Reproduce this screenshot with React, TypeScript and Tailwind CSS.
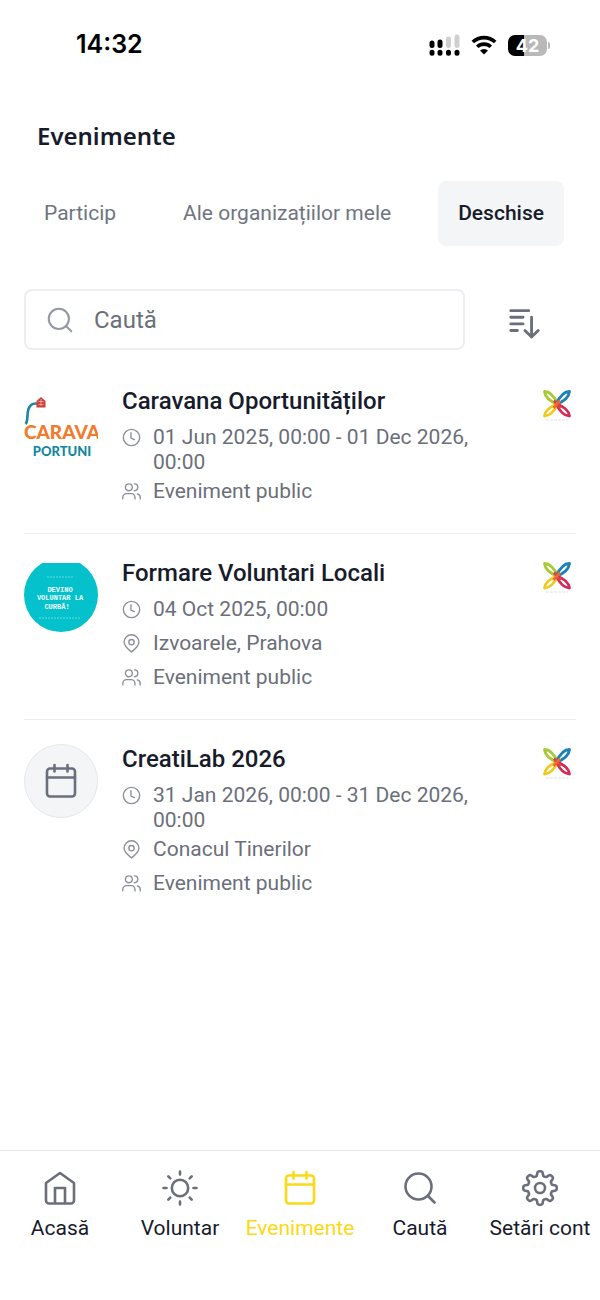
import type { ReactNode } from 'react';

type IconProps = { className?: string };

function Icon({ className, width = 2.6, children }: IconProps & { width?: number; children: ReactNode }) {
    return (
        <svg viewBox="0 0 36 36" fill="none" stroke="currentColor" strokeWidth={width} strokeLinecap="round" strokeLinejoin="round" aria-hidden="true" className={className}>
            {children}
        </svg>
    );
}

const HomeIcon = ({ className }: IconProps) => (
    <Icon className={className}>
        <path d="M4 13 18 3l14 10V30.500a3 3 0 0 1-3 3H7a3 3 0 0 1-3-3Z" />
        <path d="M13 33V18h10V33" />
    </Icon>
);

const SunIcon = ({ className }: IconProps) => (
    <Icon className={className}>
        <circle cx="18" cy="18" r="8.2" />
        <path d="M18 1.500v3M18 31.500v3M1.500 18h3M31.500 18h3M6.300 6.300l2 2M27.700 27.700l2 2M29.700 6.300l-2 2M8.300 27.700l-2 2" />
    </Icon>
);

const CalendarIcon = ({ className }: IconProps) => (
    <Icon className={className}>
        <rect x="4" y="5.500" width="28" height="28" rx="3" />
        <path d="M4 14.500h28M11.500 2v6.500M24.500 2v6.500" />
    </Icon>
);

const SearchIcon = ({ className }: IconProps) => (
    <Icon className={className}>
        <circle cx="16.500" cy="16.500" r="13" />
        <path d="m26 26 6.500 6.500" />
    </Icon>
);

// Eight soft teeth around the hub
const gearPoints = Array.from({ length: 144 }, (_, i) => {
    const a = (i / 144) * Math.PI * 2;
    const r = 14.5 + 2.3 * Math.tanh(2.2 * Math.cos(8 * a));
    return `${(18 + r * Math.cos(a)).toFixed(2)},${(18 + r * Math.sin(a)).toFixed(2)}`;
}).join(' ');

const GearIcon = ({ className }: IconProps) => (
    <Icon className={className}>
        <polygon points={gearPoints} />
        <circle cx="18" cy="18" r="5" />
    </Icon>
);

const SortIcon = ({ className }: IconProps) => (
    <Icon className={className} width={3}>
        <path d="M4 6h19M4 13h13M4 20h13M4 27h7M26 13v20M19 27l7 7 7-7" />
    </Icon>
);

const ClockIcon = ({ className }: IconProps) => (
    <Icon className={className}>
        <circle cx="18" cy="18" r="15.500" />
        <path d="M17 9v10l6.500 3" />
    </Icon>
);

const PinIcon = ({ className }: IconProps) => (
    <Icon className={className}>
        <path d="M18 34C12 29 4 23 4 15.500a14 14 0 0 1 28 0C32 23 24 29 18 34Z" />
        <circle cx="18" cy="15.500" r="5" />
    </Icon>
);

const PeopleIcon = ({ className }: IconProps) => (
    <Icon className={className}>
        <circle cx="13" cy="10" r="6.500" />
        <path d="M1.500 32v-3a7 7 0 0 1 7-7h9a7 7 0 0 1 7 7v3M23.500 3.500a6.500 6.500 0 0 1 0 13M29 22.500a7 7 0 0 1 5.500 6.500v3" />
    </Icon>
);

const OrgLogo = () => (
    <svg viewBox="0 0 30 34" fill="none" strokeWidth="2.800" strokeLinejoin="round" className="mt-[3px] mr-1 h-[34px] w-[30px] shrink-0" role="img" aria-label="Organizație">
        <path d="M2.500 2.500C8 2.500 12 6.500 16 15.500 7 12 3 8 2.500 2.500Z" stroke="#a9c936" />
        <path d="M27.500 2.500C22 2.500 18 6.500 14 15.500 23 12 27 8 27.500 2.500Z" stroke="#2080b8" />
        <path d="M2.500 27C8 27 12 23 16 14.500 7 18 3 21.500 2.500 27Z" stroke="#f0cb1f" />
        <path d="M27.500 27C22 27 18 23 14 14.500 23 18 27 21.500 27.500 27Z" stroke="#d42a55" />
        <path d="M12 11.500 18.500 19" stroke="#d9443f" />
        <path d="M18 11.500 11.500 19" stroke="#ea6a35" />
        <path d="M4 31h22" stroke="#dfe0e8" strokeWidth="1" strokeDasharray="3 1" />
    </svg>
);

const CaravanaAvatar = () => (
    <svg viewBox="0 0 74 74" className="size-[74px] shrink-0" role="img" aria-label="Caravana Oportunităților">
        <path d="M1.500 38c3-3 1-9 3-15s7-6 10-5" fill="none" stroke="#1d86a0" strokeWidth="2.600" />
        <path d="m12.500 15 4.500-4 4.500 4v6.500h-9z" fill="#cf3f3c" />
        <path d="M14.500 15.500h5M14.500 18.500h5M17 13v7" stroke="#eeb5ae" strokeWidth="0.8" />
        <text x="0" y="53" fontSize="19" fontWeight="900" fill="#f27a2c" className="font-['Lato',sans-serif]">CARAVA</text>
        <text x="38" y="70" fontSize="13" fontWeight="900" textAnchor="middle" fill="#12889f" className="font-['Lato',sans-serif]">PORTUNI</text>
    </svg>
);

const FormareAvatar = () => (
    <svg viewBox="0 0 74 74" className="size-[74px] shrink-0 rounded-full" role="img" aria-label="Devino voluntar la curbă">
        <path d="M0 5h74v69H0z" fill="#04c1cb" />
        <path d="M23 19h26M15 60h42" stroke="#5fdbe1" strokeWidth="1" strokeDasharray="2 1" />
        <g fill="#effcfc" fontSize="7" fontWeight="700" textAnchor="middle" className="font-['Liberation_Mono',monospace]">
            <text x="36" y="34">DEVINO</text>
            <text x="36" y="42">VOLUNTAR LA</text>
            <text x="33" y="51">CURBĂ!</text>
        </g>
    </svg>
);

const CalendarAvatar = () => (
    <div className="flex size-[74px] shrink-0 items-center justify-center rounded-full border border-gray-200 bg-[#f3f5f7]">
        <CalendarIcon className="size-9 text-[#6b6f7c]" />
    </div>
);

const events = [
    { title: 'Caravana Oportunităților', date: '01 Jun 2025, 00:00 - 01 Dec 2026, 00:00', place: '', avatar: <CaravanaAvatar /> },
    { title: 'Formare Voluntari Locali', date: '04 Oct 2025, 00:00', place: 'Izvoarele, Prahova', avatar: <FormareAvatar /> },
    { title: 'CreatiLab 2026', date: '31 Jan 2026, 00:00 - 31 Dec 2026, 00:00', place: 'Conacul Tinerilor', avatar: <CalendarAvatar /> },
];

const tabs = ['Particip', 'Ale organizațiilor mele', 'Deschise'];

const navItems = [
    { label: 'Acasă', icon: HomeIcon },
    { label: 'Voluntar', icon: SunIcon },
    { label: 'Evenimente', icon: CalendarIcon },
    { label: 'Caută', icon: SearchIcon },
    { label: 'Setări cont', icon: GearIcon },
];

function StatusBar() {
    return (
        <div className="flex h-[90px] items-center justify-between pr-[50px] pl-[76px] text-black">
            <span className="font-['Inter',sans-serif] text-[25px] font-semibold">14:32</span>
            <div className="flex items-center gap-[11px]">
                <svg viewBox="0 0 31 22" className="h-[22px] w-[31px]" aria-hidden="true">
                    <path d="M3 9v2.500M11 8v3.500M3 18.200v1M11 18.200v1M19.500 18.200v1M28 18.200v1" stroke="#000" strokeWidth="5" strokeLinecap="round" />
                    <path d="M19.500 5v6.500M28 3v8.500" stroke="#cfcfcf" strokeWidth="5" strokeLinecap="round" />
                </svg>
                <svg viewBox="0 0 26 20" fill="none" stroke="#000" strokeWidth="3.600" className="h-5 w-[26px]" aria-hidden="true">
                    <path d="M1.800 7a16.500 16.500 0 0 1 22.400 0M6.200 11.800a10 10 0 0 1 13.600 0" />
                    <path d="M13 19.500 9 15.600a5.800 5.800 0 0 1 8 0Z" fill="#000" stroke="none" />
                </svg>
                <div className="flex items-center gap-px">
                    <div className="flex h-[21px] w-[39px] items-center justify-center rounded-[7px] bg-linear-to-r from-black from-42% to-[#b9b9b9] to-42% font-['Inter',sans-serif] text-[18px] font-bold text-white">42</div>
                    <div className="h-[7px] w-[2px] rounded-r-full bg-[#b9b9b9]" />
                </div>
            </div>
        </div>
    );
}

function Row({ icon, children }: { icon: ReactNode; children: ReactNode }) {
    return (
        <div className="flex min-h-[34px] gap-3 pt-1">
            <span className="flex h-[25px] shrink-0 items-center text-[#8c8f98]">{icon}</span>
            <p className="text-[21px] leading-[25px] text-[#6b6f7a]">{children}</p>
        </div>
    );
}

export default function App() {
    return (
        <div className="flex min-h-screen flex-col bg-white font-['Roboto',sans-serif] text-[#171b2b]">
            <StatusBar />

            <header className="px-[37px] pt-[27px]">
                <h1 className="font-['Noto_Sans',sans-serif] text-[24px] leading-[38px] font-semibold">Evenimente</h1>
            </header>

            <div className="mt-[26px] flex gap-[27px] px-6" role="tablist">
                {tabs.map((tab) => (
                    <button
                        key={tab}
                        role="tab"
                        aria-selected={tab === 'Deschise'}
                        className="h-[65px] rounded-lg px-5 text-[21px] whitespace-nowrap text-[#70747f] aria-selected:bg-[#f3f5f7] aria-selected:font-medium aria-selected:text-[#171b2b]"
                    >
                        {tab}
                    </button>
                ))}
            </div>

            <div className="mt-[43px] flex items-center gap-[42px] pr-[59px] pl-6">
                <label className="flex h-[61px] min-w-0 flex-1 items-center gap-5 rounded-lg border-2 border-gray-200/70 px-5">
                    <SearchIcon className="size-7 shrink-0 text-[#9498a1]" />
                    <input type="text" aria-label="Caută" placeholder="Caută" className="w-full min-w-0 text-[24px] outline-none placeholder:text-[#6b6f7a]" />
                </label>
                <button aria-label="Sortează" className="pt-1 text-[#6b6f7c]">
                    <SortIcon className="size-[34px]" />
                </button>
            </div>

            <ul className="mt-3 flex-1 divide-y divide-gray-200/70 px-6">
                {events.map((event) => (
                    <li key={event.title} className="flex py-6">
                        {event.avatar}
                        <div className="ml-6 min-w-0 flex-1 pr-16">
                            <h2 className="mb-[5px] text-[24px] leading-[30px] font-medium">{event.title}</h2>
                            <Row icon={<ClockIcon className="size-[19px]" />}>{event.date}</Row>
                            {event.place && <Row icon={<PinIcon className="size-[19px]" />}>{event.place}</Row>}
                            <Row icon={<PeopleIcon className="size-[19px]" />}>Eveniment public</Row>
                        </div>
                        <OrgLogo />
                    </li>
                ))}
            </ul>

            <nav className="grid grid-cols-5 border-t border-gray-200 pt-[19px] pb-[58px]">
                {navItems.map(({ label, icon: NavIcon }) => (
                    <a
                        key={label}
                        href="#"
                        aria-current={label === 'Evenimente' ? 'page' : undefined}
                        className="group flex flex-col items-center gap-2 text-[21px] leading-[28px] whitespace-nowrap aria-[current=page]:text-[#fbd914]"
                    >
                        <NavIcon className="size-9 text-[#6b6f7c] group-aria-[current=page]:text-[#fbd914]" />
                        {label}
                    </a>
                ))}
            </nav>
        </div>
    );
}
